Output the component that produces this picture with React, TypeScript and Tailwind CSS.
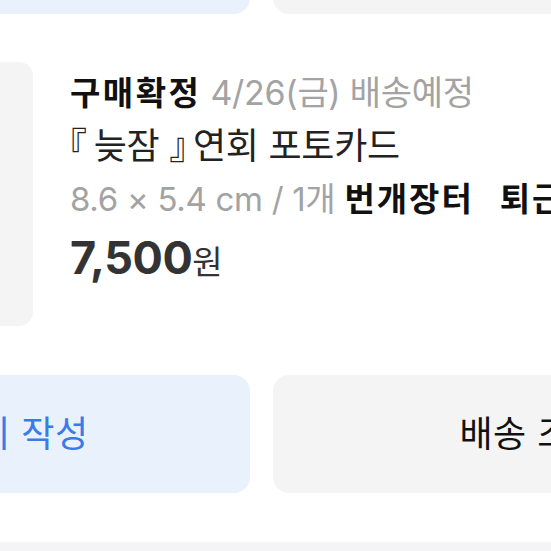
import React from 'react';

const font = "font-['Inter','Noto_Sans_CJK_KR',sans-serif]";

const ActionRow: React.FC<{ left: string; right: string; className?: string }> = ({ left, right, className }) => (
  <div className={`flex gap-[23px] ${className ?? ''}`}>
    <button
      type="button"
      className="w-[468px] h-[118px] shrink-0 rounded-[16px] bg-[#e9f1fd] text-[#3a7be6] text-[36px] tracking-[0.5px] flex items-center justify-center"
    >
      {left}
    </button>
    <button
      type="button"
      className="w-[518px] h-[118px] shrink-0 rounded-[16px] bg-[#f4f4f4] text-[#111111] text-[36px] tracking-[0.5px] flex items-center justify-center"
    >
      {right}
    </button>
  </div>
);

export default function App() {
  return (
    <div className={`w-[551px] h-[551px] overflow-hidden bg-white ${font}`}>
      <div className="w-[1009px] -ml-[218px] -mt-[104px] flex flex-col">
        <ActionRow left="후기 작성" right="배송 조회" />

        {/* order item */}
        <div className="flex mt-[48px] h-[264px]">
          <div className="w-[251px] h-[264px] shrink-0 rounded-[14px] bg-[#f4f4f4]" />
          <div className="ml-[37px] pt-[4px] flex flex-col whitespace-nowrap text-[33px] leading-[53px] tracking-[-0.3px]">
            <div>
              <span className="font-bold text-[#111111] tracking-[2.5px]">구매확정</span>
              <span className="ml-[9px] text-[34px] text-[#a3a3a3]">4/26(금) 배송예정</span>
            </div>
            <div className="text-[36px] text-[#222222]">
              <span className="inline-block -ml-[19px]">『</span>
              <span className="inline-block ml-[7px]">늦잠</span>
              <span className="inline-block ml-[10px]">』</span>
              <span className="inline-block -ml-[12px]">연회 포토카드</span>
            </div>
            <div>
              <span className="text-[#a3a3a3]">8.6 × 5.4 cm / 1개</span>
              <span className="ml-[9px] font-bold text-[#111111] tracking-[2px] [word-spacing:16px]">번개장터 퇴근길 포카 상점</span>
            </div>
            <div className="mt-[5px] text-[#333333]">
              <span className="font-bold text-[45px] tracking-[-0.5px]">7,500</span>
              <span className="text-[33px]">원</span>
            </div>
          </div>
        </div>

        <ActionRow left="후기 작성" right="배송 조회" className="mt-[49px]" />
      </div>
      <div className="h-[20px] bg-[#f4f4f6] mt-[49px]" />
    </div>
  );
}
